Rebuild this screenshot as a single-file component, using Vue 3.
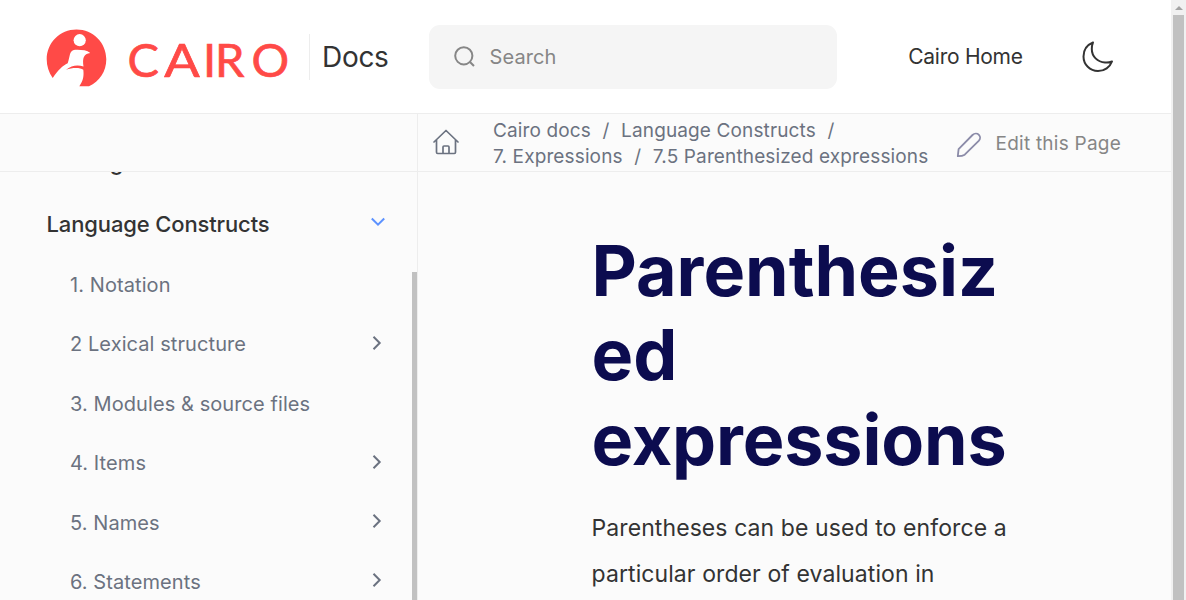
<script setup>
const items = [
  { label: '1. Notation', more: false },
  { label: '2 Lexical structure', more: true },
  { label: '3. Modules & source files', more: false },
  { label: '4. Items', more: true },
  { label: '5. Names', more: true },
  { label: '6. Statements', more: true },
]
</script>

<template>
  <div class="page">
    <div class="main">
      <header class="top">
        <svg class="logo" width="250" height="60" viewBox="0 0 250 60" role="img" aria-label="Cairo">
          <path fill="#ff4a47" d="M6.700 51C2.700 45.500 .7 39 .7 32.300C.7 15.800 14 2.500 30.500 2.500C47 2.500 60.300 15.800 60.300 32.300C60.300 44.500 53.500 54.500 43 59.300H33.300C37.500 53 38 49 37.300 42.800C34 40.200 26 40.500 20 42.800C25.500 38.300 31.500 37.500 37.500 39.500C36.300 31.500 37.500 26.500 44.300 26C40.500 22.800 34 22.600 29 22.800C22.800 23.500 24.500 29 21.700 36.200C16.500 38.800 12.500 42.500 6.700 51Z"/>
          <circle cx="33.700" cy="13.200" r="6.100" fill="#fff"/>
          <text class="word" y="49.500"><tspan x="81.500">C</tspan><tspan x="118.300" textLength="35.500" lengthAdjust="spacingAndGlyphs">A</tspan><tspan x="157 169 205.500">IRO</tspan></text>
        </svg>
        <span class="docs">Docs</span>
        <div class="search">
          <svg width="22" height="22" viewBox="0 0 22 22" fill="none" stroke="#868686" stroke-width="2"><circle cx="9.800" cy="9.800" r="8.600"/><path d="M15.700 15.700L20 20"/></svg>
          <span>Search</span>
        </div>
        <a class="home-link">Cairo Home</a>
        <svg class="moon" width="32" height="32" viewBox="0 0 32 32" fill="none" stroke="#333" stroke-width="2" stroke-linejoin="round"><path d="M11 1.500C4.800 4 1.500 9.500 1.500 15.500C1.500 23.700 8 30 16 30C22.500 30 28 26 30 20.500C27.500 21.500 25.500 21.800 23 21.500C15.500 21 9.800 15.500 9.800 8C9.800 5.700 10.200 3.500 11 1.500Z"/></svg>
      </header>
      <div class="cols">
        <aside class="side">
          <div class="side-bar"></div>
          <div class="nav">
            <div class="prev">Getting Started</div>
            <div class="group"><span>Language Constructs</span>
              <svg width="16" height="10" viewBox="0 0 16 10" fill="none" stroke="#5c92ff" stroke-width="2"><path d="M1.800 1.500L8 7.700L14.200 1.500"/></svg>
            </div>
            <div v-for="i in items" :key="i.label" class="item"><span>{{ i.label }}</span>
              <svg v-if="i.more" width="10" height="14" viewBox="0 0 10 14" fill="none" stroke="#6b7280" stroke-width="2"><path d="M1.500 .8L7.700 7L1.500 13.200"/></svg>
            </div>
            <div class="side-thumb"></div>
          </div>
        </aside>
        <main class="content">
          <div class="crumb-bar">
            <svg class="house" width="28" height="28" viewBox="0 0 28 28" fill="none" stroke="#6b7280" stroke-width="1.700" stroke-linejoin="round" stroke-linecap="round"><path d="M2 14L14 2.500L26 14M4.500 12V24.300Q4.500 25.500 5.700 25.500H22.300Q23.500 25.500 23.500 24.300V12M11 25.500V19Q11 18 12 18H16Q17 18 17 19V25.500"/></svg>
            <div class="crumbs">
              <div><span>Cairo docs</span><i>/</i><span>Language Constructs</span><i>/</i></div>
              <div><span>7. Expressions</span><i>/</i><span>7.5 Parenthesized expressions</span></div>
            </div>
            <svg class="pen" width="26" height="26" viewBox="0 0 26 26" fill="none" stroke="#8b8ba8" stroke-width="1.800" stroke-linejoin="round"><path d="M1.800 24.200L2.600 17.200L16.500 3C18.500 1.200 21.300 1.200 22.900 2.800C24.500 4.400 24.500 7 22.700 8.900L8.700 22.700C7 23.900 4.500 24.200 1.800 24.200Z"/></svg>
            <span class="edit">Edit this Page</span>
          </div>
          <h1><span>Parenthesiz</span><span>ed</span><span class="last">expressions</span></h1>
          <p><span>Parentheses can be used to enforce a</span><span>particular order of evaluation in</span></p>
        </main>
      </div>
    </div>
    <div class="scroll"><div class="arrow"></div><div class="thumb"></div></div>
  </div>
</template>

<style>
body { overflow: hidden; }
</style>
<style scoped>
.page { display: flex; width: 1186px; height: 600px; overflow: hidden; background: #fbfbfb; font-family: Inter, "Liberation Sans", sans-serif; color: #333; white-space: nowrap; }
.page * { box-sizing: border-box; }
svg { display: block; flex: none; }
.main { width: 1171px; flex: none; display: flex; flex-direction: column; }
.top { height: 114px; flex: none; background: #fff; border-bottom: 1px solid #ededed; display: flex; align-items: center; padding-left: 46px; }
.logo { width: 250px; margin-right: 13px; }
.word { font: 400 47px Lato, sans-serif; fill: #ff4a47; stroke: #ff4a47; stroke-width: .7px; }
.docs { width: 120px; height: 46px; line-height: 46px; padding-left: 12px; border-left: 1px solid #ededed; font-size: 28px; letter-spacing: -.3px; }
.search { width: 408px; height: 64px; border-radius: 11px; background: #f5f5f5; display: flex; align-items: center; padding-left: 24.500px; gap: 14px; font-size: 20px; color: #868686; letter-spacing: .1px; }
.home-link { width: 174px; margin-left: 71.300px; font-size: 21px; letter-spacing: -.28px; }
.cols { display: flex; flex: 1; min-height: 0; }
.side { width: 418px; flex: none; border-right: 1px solid #ededed; }
.side-bar { height: 58px; border-bottom: 1px solid #ededed; }
.nav { position: relative; height: 428px; overflow: hidden; }
.prev { height: 24px; line-height: 24px; margin: -22px 0 20px 48px; font-size: 22px; font-weight: 500; letter-spacing: -.13px; }
.group { height: 60px; display: flex; align-items: center; justify-content: space-between; padding: 0 31px 0 46.500px; font-size: 22px; font-weight: 500; letter-spacing: -.13px; }
.group svg { margin-top: -4px; }
.item { height: 59.400px; display: flex; align-items: center; justify-content: space-between; padding: 0 35px 0 70px; font-size: 20px; color: #6b7280; letter-spacing: .08px; }
.item span { margin-top: 2.600px; }
.item svg { margin-top: -.5px; }
.side-thumb { position: absolute; right: 0; top: 100px; width: 5px; height: 400px; background: #c1c1c1; }
.content { flex: 1; min-width: 0; }
.crumb-bar { height: 58px; border-bottom: 1px solid #ededed; display: flex; align-items: center; padding-left: 14px; font-size: 19px; letter-spacing: .13px; color: #6b7280; }
.house { margin-top: -1px; }
.crumbs { width: 462.500px; margin: 2px 0 0 33px; line-height: 26px; }
.crumbs i { font-style: normal; margin: 0 11.600px; }
.pen { margin-top: 4px; }
.edit { margin: 1px 0 0 14px; color: #868686; letter-spacing: .24px; }
h1 { margin: 57px 0 0 173.500px; font-size: 70px; line-height: 84.400px; font-weight: 700; color: #0c0c4f; }
h1 .last { letter-spacing: -.15px; }
h1 span, p span { display: block; }
p { margin: 23px 0 0 173.500px; font-size: 23px; line-height: 46px; letter-spacing: .09px; }
.scroll { width: 15px; background: #f1f1f1; padding-left: 2px; }
.arrow { width: 0; height: 0; margin: 6px 0 5px 2px; border: 4px solid transparent; border-top: 0; border-bottom: 4px solid #a3a3a3; }
.thumb { width: 11px; height: 585px; background: #c1c1c1; }
</style>
